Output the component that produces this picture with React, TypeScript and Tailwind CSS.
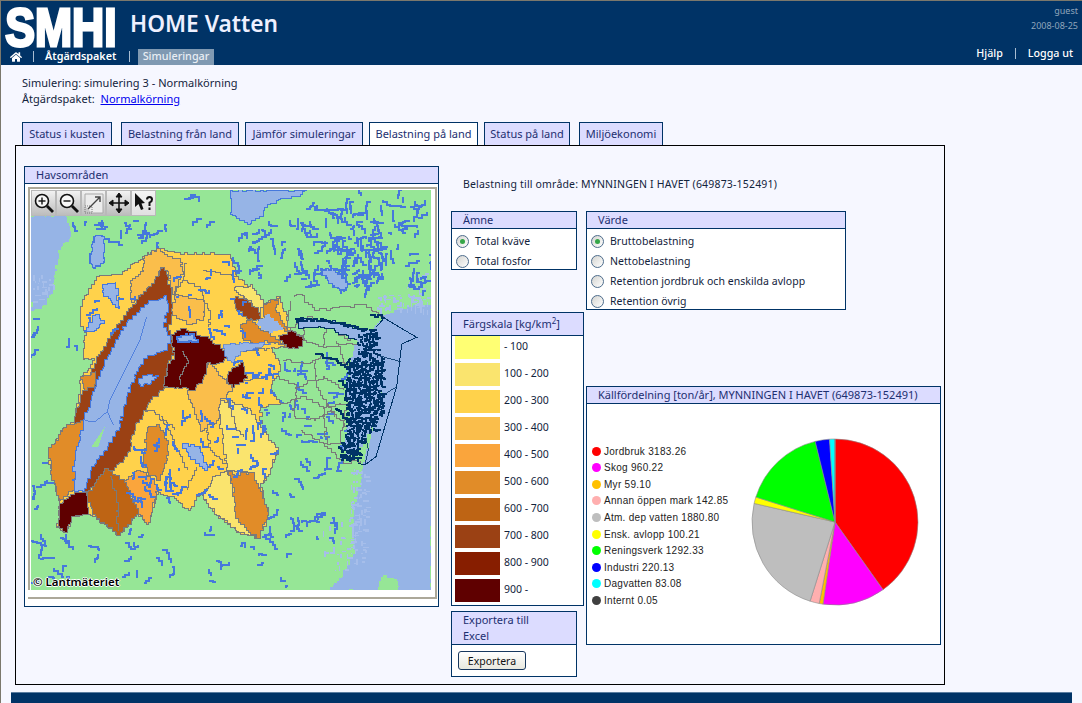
import { ReactNode } from "react";
import { FaHome } from "react-icons/fa";

const font = "font-['Noto_Sans','DejaVu_Sans',sans-serif]";

function Panel({ title, className, children }: { title: ReactNode; className: string; children: ReactNode }) {
  return (
    <section className={`border border-[#003366] bg-white ${className}`}>
      <h2 className="border-b border-[#003366] bg-[#DCDCFF] pl-[11px] text-[11px] font-normal leading-[16px] text-[#1c2f70]">{title}</h2>
      {children}
    </section>
  );
}

function Radio({ label, checked }: { label: string; checked?: boolean }) {
  return (
    <div className="flex h-[20px] items-center">
      <span className="mr-[6px] flex h-[13px] w-[13px] items-center justify-center rounded-full border border-[#4d6c8c] bg-gradient-to-br from-[#d4d4d0] to-white">
        {checked && <span className="h-[5px] w-[5px] rounded-full bg-[#35a648]" />}
      </span>
      <span className="mt-[2px] text-[10.5px] tracking-[0.05px] text-[#12233c]">{label}</span>
    </div>
  );
}

function Sep({ className }: { className: string }) {
  return <span className={`h-[11px] w-px bg-[#a9bdd2] ${className}`} />;
}

const tabs = [
  { label: "Status i kusten", width: "w-[90px]", gap: "ml-0" },
  { label: "Belastning från land", width: "w-[118px]", gap: "ml-[9px]" },
  { label: "Jämför simuleringar", width: "w-[118px]", gap: "ml-[6px]" },
  { label: "Belastning på land", width: "w-[109px]", gap: "ml-[6px]", active: true },
  { label: "Status på land", width: "w-[86px]", gap: "ml-[6px]" },
  { label: "Miljöekonomi", width: "w-[84px]", gap: "ml-[9px]" },
];

const scale = [
  { color: "bg-[#FFFF73]", label: "- 100" },
  { color: "bg-[#FAE46E]", label: "100 - 200" },
  { color: "bg-[#FFD24B]", label: "200 - 300" },
  { color: "bg-[#FABE4B]", label: "300 - 400" },
  { color: "bg-[#FAA53C]", label: "400 - 500" },
  { color: "bg-[#E18C28]", label: "500 - 600" },
  { color: "bg-[#BE6414]", label: "600 - 700" },
  { color: "bg-[#9B4114]", label: "700 - 800" },
  { color: "bg-[#871E00]", label: "800 - 900" },
  { color: "bg-[#5F0000]", label: "900 -" },
];

const sources = [
  { name: "Jordbruk", value: 3183.26, color: "#ff0000" },
  { name: "Skog", value: 960.22, color: "#ff00ff" },
  { name: "Myr", value: 59.1, color: "#ffc000" },
  { name: "Annan öppen mark", value: 142.85, color: "#ffafaf" },
  { name: "Atm. dep vatten", value: 1880.8, color: "#bebebe" },
  { name: "Ensk. avlopp", value: 100.21, color: "#ffff00" },
  { name: "Reningsverk", value: 1292.33, color: "#00ff00" },
  { name: "Industri", value: 220.13, color: "#0000ff" },
  { name: "Dagvatten", value: 83.08, color: "#00ffff" },
  { name: "Internt", value: 0.05, color: "#404040" },
];

function Pie() {
  const total = sources.reduce((s, x) => s + x.value, 0);
  let a = -Math.PI / 2;
  const r = 83;
  return (
    <svg width="170" height="170" viewBox="-85 -85 170 170" className="mt-[33px] shrink-0">
      {sources.map((s) => {
        const b = a + (s.value / total) * Math.PI * 2;
        const d = `M0 0L${r * Math.cos(a)} ${r * Math.sin(a)}A${r} ${r} 0 ${b - a > Math.PI ? 1 : 0} 1 ${r * Math.cos(b)} ${r * Math.sin(b)}Z`;
        a = b;
        return <path key={s.name} d={d} fill={s.color} stroke="#8c8c8c" strokeWidth="0.6" />;
      })}
    </svg>
  );
}

// seeded so the lakes land in the same place every run
let seed = 1234;
function rnd() {
  seed = (seed * 16807) % 2147483647;
  return seed / 2147483647;
}

const snap = (v: number) => Math.round(v / 4) * 4;

// turns a coarse M/L outline into a stepped edge like the map's raster
function stair(d: string) {
  let out = "";
  for (const sub of d.split("M").filter(Boolean)) {
    const nums = sub.match(/-?\d+(\.\d+)?/g)!.map(Number);
    const closed = sub.includes("Z");
    const pts: number[][] = [];
    for (let i = 0; i < nums.length; i += 2) pts.push([nums[i], nums[i + 1]]);
    if (closed) pts.push(pts[0]);
    out += `M${snap(pts[0][0])} ${snap(pts[0][1])}`;
    for (let i = 1; i < pts.length; i++) {
      const [x0, y0] = pts[i - 1];
      const [x1, y1] = pts[i];
      const n = Math.max(1, Math.ceil(Math.hypot(x1 - x0, y1 - y0) / 10));
      for (let k = 1; k <= n; k++) {
        const t = k / n;
        const j = k === n ? 0 : 7;
        const x = x0 + (x1 - x0) * t + (rnd() - 0.5) * j;
        const y = y0 + (y1 - y0) * t + (rnd() - 0.5) * j;
        out += `H${snap(x)}V${snap(y)}`;
      }
    }
    if (closed) out += "Z";
  }
  return out;
}

function scatter(zones: number[][], len: number) {
  let d = "";
  for (const [x, y, w, h, n] of zones) {
    for (let i = 0; i < n; i++) {
      let px = snap(x + rnd() * w);
      let py = snap(y + rnd() * h);
      let angle = rnd() * Math.PI * 2;
      const steps = 1 + Math.floor(rnd() * 4);
      d += `M${px} ${py}`;
      for (let s = 0; s < steps; s++) {
        const l = 5 + rnd() * len;
        angle += (rnd() - 0.5) * 1.6;
        px = snap(px + Math.cos(angle) * l);
        py = snap(py + Math.sin(angle) * l);
        d += `H${px}V${py}`;
      }
    }
  }
  return d;
}

function dots(zones: number[][], size: number) {
  let d = "";
  for (const [x, y, w, h, n] of zones) {
    for (let i = 0; i < n; i++) {
      const px = snap(x + rnd() * w);
      const py = snap(y + rnd() * h);
      d += rnd() > 0.5 ? `M${px} ${py}h${snap(4 + rnd() * size)}` : `M${px} ${py}v${snap(4 + rnd() * size)}`;
    }
  }
  return d;
}

const northLakes = scatter(
  [
    [850, -110, 340, 90, 30],
    [880, 20, 170, 150, 60],
    [640, -30, 560, 120, 60],
    [620, 90, 580, 90, 36],
    [110, -110, 480, 100, 14],
    [110, -20, 300, 70, 18],
    [1130, 130, 70, 70, 4],
  ],
  11,
);
const southLakes = scatter(
  [
    [5, 690, 50, 380, 10],
    [10, 900, 900, 170, 40],
    [740, 700, 200, 220, 18],
    [5, 240, 140, 130, 6],
  ],
  10,
);
const eastLakes = scatter([[730, 400, 220, 290, 36]], 10);
const catchLakes = scatter(
  [
    [430, 80, 220, 230, 20],
    [170, 150, 140, 210, 8],
    [590, 480, 150, 240, 24],
    [380, 560, 220, 260, 24],
    [270, 640, 110, 220, 14],
    [630, 370, 110, 140, 10],
  ],
  9,
);
const fringe = dots(
  [
    [960, 720, 50, 280, 90],
    [1040, 195, 160, 45, 60],
    [1130, 130, 70, 90, 24],
    [3, 130, 70, 90, 24],
    [880, 860, 90, 180, 30],
  ],
  14,
);
const archipelago = dots(
  [
    [985, 300, 55, 80, 110],
    [950, 385, 110, 85, 270],
    [945, 470, 115, 85, 290],
    [950, 555, 90, 50, 120],
    [940, 605, 65, 40, 60],
    [928, 640, 60, 50, 100],
  ],
  8,
);
const armPath = stair("M795 268L880 270L960 288L1010 300M855 372L920 392L960 425M915 535L960 580M925 450L960 480M1020 255L1062 264");

const silhouette =
  "M155 215L200 140L270 130L345 75L380 55L450 70L595 70L620 140L700 220L748 198L780 300L820 330L770 350L722 355L752 410L722 480L752 522L692 532L692 600L742 660L720 730L690 772L716 850L690 922L632 908L560 850L515 790L480 840L430 800L385 782L355 882L325 852L270 915L200 860L176 850L130 860L110 906L80 886L88 820L70 750L55 662L100 590L130 570L150 480L150 440L170 420L190 385L158 385L165 300L150 260Z";

const regions: { fill: string; d: string }[] = [
  { fill: "#FFD24B", d: silhouette },
  { fill: "#9B4114", d: "M400 105L425 190L430 250L415 300L435 370L410 410L410 470L350 530L315 600L290 680L235 740L170 785L130 730L130 570L150 500L200 380L260 285L300 230L350 170Z" },
  { fill: "#FABE4B", d: "M345 75L380 55L410 80L450 85L458 130L432 190L415 125L398 110L370 160L320 212L305 215L300 150L340 120Z" },
  { fill: "#FABE4B", d: "M435 190L470 200L525 215L520 270L480 285L425 250Z" },
  { fill: "#FAE46E", d: "M610 172L660 165L700 215L692 250L640 195Z" },
  { fill: "#9B4114", d: "M610 205L640 200L692 250L695 275L650 265L620 235Z" },
  { fill: "#E18C28", d: "M700 225L748 198L735 240L772 302L730 285L700 255Z" },
  { fill: "#E18C28", d: "M632 282L660 265L690 300L730 320L778 352L730 335L690 340L640 332Z" },
  { fill: "#FABE4B", d: "M470 480L535 395L608 482L572 515L565 572L515 602L500 550Z" },
  { fill: "#FAE46E", d: "M566 522L590 508L660 540L692 592L742 660L720 730L690 772L650 722L592 720L580 640Z" },
  { fill: "#FAE46E", d: "M515 790L555 735L592 722L610 770L620 860L682 922L632 908L590 872L560 850Z" },
  { fill: "#E18C28", d: "M592 718L610 735L670 730L716 850L690 922L670 912L615 860L610 770Z" },
  { fill: "#E18C28", d: "M340 685L350 592L385 582L415 642L410 692L392 752L350 722Z" },
  { fill: "#FAA53C", d: "M282 750L320 720L370 750L382 782L355 882L330 852Z" },
  { fill: "#BE6414", d: "M165 792L225 715L282 755L325 852L270 915L200 860Z" },
  { fill: "#E18C28", d: "M55 662L100 590L165 570L140 680L135 780L90 812L70 750Z" },
  { fill: "#E18C28", d: "M150 440L195 425L192 470L165 482Z" },
  { fill: "#5F0000", d: "M425 310L460 296L540 330L582 365L585 390L560 402L532 395L522 440L495 480L400 470L410 410L432 380Z" },
  { fill: "#5F0000", d: "M590 430L630 395L640 400L652 445L612 470L586 442Z" },
  { fill: "#5F0000", d: "M745 315L780 300L822 330L802 357L770 350Z" },
  { fill: "#5F0000", d: "M88 820L130 785L168 790L176 850L130 860L110 906L80 886Z" },
].map((r) => ({ fill: r.fill, d: stair(r.d) }));

const innerLines = stair(
  "M460 150L510 175L520 215M525 215L540 260L535 290M520 120L570 130L620 140M455 365L475 400L450 440L450 465M345 545L370 540L420 610L470 720M530 590L540 660L590 710M590 510L620 600L640 620M500 710L470 780M390 560L430 600M240 740L260 800L262 905M640 365L720 355M640 450L700 440M470 100L460 150L435 190",
);

const eastLines = stair(
  "M790 200L810 190L850 240L900 235L1000 225L1060 262M770 300L830 260L900 290L950 330L1000 310M820 330L880 350L960 340L1020 370M760 390L830 400L870 380L950 400L985 440M740 440L800 470L880 440L940 480M752 520L810 500L880 530L950 520M790 560L850 570L900 540L960 600M810 600L880 640L930 640M880 640L940 700L990 690M850 390L860 470L910 560M920 330L940 400M830 260L820 330M780 210L770 300M890 290L880 350M800 470L790 560M880 530L890 640M950 520L930 640",
);

function MapView() {
  return (
    <svg width="400" height="400" viewBox="3 -120 1200 1200" shapeRendering="crispEdges" className="block">
      <rect x="3" y="-120" width="1200" height="1200" fill="#96E696" />
      <path d={stair("M3 -42L108 -42L125 20L90 60L70 180L50 225L3 250Z")} fill="#96B4E6" />
      <path d={stair("M600 -120L830 -120L810 -102L750 -92L700 -57L700 -42L660 -17L620 -42L600 -52Z")} fill="#96B4E6" stroke="#4678DC" strokeWidth="3" />
      <path d={stair("M1203 222L1160 225L1110 240L1060 262L1030 300L1060 470L1040 570L1000 705L990 760L970 860L975 970L940 1040L900 1080L1040 1080L1060 1035L1100 1050L1105 1080L1203 1080Z")} fill="#96B4E6" />
      <path d={fringe} fill="none" stroke="#A6BEEA" strokeWidth="5" />
      <path d={northLakes + southLakes + eastLakes} fill="none" stroke="#4678DC" strokeWidth="6.500" strokeLinecap="square" />
      <path d={stair("M870 115L910 120L960 165L945 185L900 160Z")} fill="#96B4E6" stroke="#4678DC" strokeWidth="4" />
      <path d={stair("M190 20L222 20L225 95L195 115L178 90Z")} fill="#96B4E6" stroke="#4678DC" strokeWidth="4" />
      {regions.map((r) => (
        <path key={r.d} d={r.d} fill={r.fill} stroke="#7a7a7a" strokeWidth="3" />
      ))}
      <path d={innerLines} fill="none" stroke="#7a7a7a" strokeWidth="3" />
      <path d={catchLakes} fill="none" stroke="#4678DC" strokeWidth="6.500" strokeLinecap="square" />
      <path d={stair("M405 195L415 240L400 290L420 330L410 360L370 375L345 385L320 430L300 470L280 540L270 590L230 660L185 720L165 782L135 782L130 700L150 620L170 540L205 440L235 370L290 270L350 220Z")} fill="#96B4E6" stroke="#4678DC" strokeWidth="3" />
      <path d="M350 260L330 330L240 510L232 545L250 585M232 545L195 575L165 572" fill="none" stroke="#4678DC" strokeWidth="2.500" />
      <path d="M185 650L225 590L205 650Z" fill="#96E696" />
      <path d={stair("M325 445L350 430L385 440L360 462L330 465Z")} fill="#96B4E6" stroke="#4678DC" strokeWidth="3" />
      <path d={stair("M440 320L480 310L505 335L450 335Z")} fill="#96B4E6" stroke="#4678DC" strokeWidth="5" />
      <path d={stair("M580 345L640 335L720 342L640 365L610 395L582 372Z")} fill="#96B4E6" stroke="#4678DC" strokeWidth="2" />
      <path d={stair("M680 280L712 250L760 300L720 312Z")} fill="#96B4E6" />
      <path d={stair("M215 165L255 155L268 235L240 205L220 200Z")} fill="#96B4E6" stroke="#4678DC" strokeWidth="3" />
      <path d={stair("M165 300L195 250L222 280L190 305Z")} fill="#96B4E6" stroke="#4678DC" strokeWidth="3" />
      <path d={stair("M455 640L510 650L530 720L480 680Z")} fill="#96B4E6" stroke="#4678DC" strokeWidth="3" />
      <path d={eastLines} fill="none" stroke="#7a7a7a" strokeWidth="3" />
      <path d="M1040 290L1062 264L1160 322L1115 342L1100 470L1038 680L1005 705L985 700" fill="none" stroke="#003366" strokeWidth="3" />
      <path d="M1040 375L1112 395M1060 495L1100 470M1045 575L1005 610L1015 660L1005 705" fill="none" stroke="#003366" strokeWidth="2.500" />
      <path d={stair("M800 265L880 268L950 290L1010 300L1020 340L880 290L810 295Z")} fill="#96B4E6" stroke="#003366" strokeWidth="3" />
      <path d={stair("M990 300L1040 300L1060 480L1040 570L1000 650L960 680L940 650L960 560L950 470L960 400Z")} fill="#96B4E6" />
      <path d={archipelago} fill="none" stroke="#003366" strokeWidth="5.500" />
      <path d={armPath} fill="none" stroke="#003366" strokeWidth="6" />
    </svg>
  );
}

function ToolButton({ active, children }: { active?: boolean; children: ReactNode }) {
  return (
    <div className={`flex h-[26px] w-[25px] items-center justify-center border border-[#b9b9b9] ${active ? "bg-gradient-to-b from-[#f4f4f4] to-[#e0e0e0]" : "bg-gradient-to-b from-[#f2f2f2] to-[#bdbdbd]"}`}>
      {children}
    </div>
  );
}

function Lens({ plus }: { plus?: boolean }) {
  return (
    <svg width="22" height="22" viewBox="0 0 22 22" fill="none" stroke="#111">
      <circle cx="9" cy="9" r="6.500" fill="#f7f7f7" strokeWidth="1.600" />
      <path d="M14 14L20 20" strokeWidth="2.800" />
      <path d="M5.500 9H12.500" strokeWidth="1.400" />
      {plus && <path d="M9 5.500V12.500" strokeWidth="1.400" />}
    </svg>
  );
}

function Toolbar() {
  return (
    <div className="absolute left-0 top-0 flex">
      <ToolButton><Lens plus /></ToolButton>
      <ToolButton><Lens /></ToolButton>
      <ToolButton>
        <svg width="22" height="22" viewBox="0 0 22 22" fill="none">
          <path d="M2 14V2H20V21H9" stroke="#aaa" fill="#ececec" />
          <path d="M2 14H9V21H2Z" stroke="#777" strokeDasharray="1 1" />
          <path d="M5 17L17 5M12 5H17V10" stroke="#444" strokeWidth="1.400" />
        </svg>
      </ToolButton>
      <ToolButton>
        <svg width="22" height="22" viewBox="0 0 22 22" fill="#111" stroke="#111">
          <path d="M3 11H19M11 3V19" strokeWidth="1.600" />
          <path d="M11 1L8 5H14ZM11 21L8 17H14ZM1 11L5 8V14ZM21 11L17 8V14Z" />
        </svg>
      </ToolButton>
      <ToolButton active>
        <svg width="22" height="22" viewBox="0 0 22 22" fill="#111">
          <path d="M2 1L2 15L5.500 12L8 18L10.500 17L8.500 11.500L12 11Z" />
          <path d="M13 7.500Q13 4 16.500 4Q20 4 20 7.500Q20 10 17.500 11V14H15.500V10Q18 9 18 7.500Q18 6 16.500 6Q15 6 15 7.500ZM15.500 15.500H17.500V18H15.500Z" />
        </svg>
      </ToolButton>
    </div>
  );
}

export default function App() {
  return (
    <div className={`${font} h-[703px] w-[1082px] overflow-hidden border-l border-t border-[#7b786c] bg-[#F6F7FF] text-[11px] text-[#12233c]`}>
      <header className="flex h-[64px] justify-between bg-[#003366] text-white">
        <div>
          <div className="flex h-[47px] items-start">
            <svg width="118" height="43" viewBox="0 0 118 43" className="ml-[3px] mt-[4px]">
              <g transform="scale(0.84 1)">
                <text x="1.500" y="41" fill="#fff" stroke="#fff" strokeWidth="3" fontFamily="'Liberation Sans',sans-serif" fontWeight="700" fontSize="53">SMHI</text>
              </g>
            </svg>
            <h1 className="ml-[8px] mt-[6px] text-[22.700px] font-semibold leading-[34px] text-[#eef0ff]">HOME Vatten</h1>
          </div>
          <nav className="flex h-[17px] items-center text-[10.800px] font-semibold">
            <FaHome className="ml-[9px] w-[12px] text-[12px] text-white" />
            <Sep className="ml-[11px]" />
            <span className="ml-[11px] w-[72px] whitespace-nowrap">Åtgärdspaket</span>
            <Sep className="ml-[12px]" />
            <span className="ml-[8px] flex h-[16px] w-[76px] items-center justify-center bg-[#7f99b2] font-medium text-[#e9eef4]">Simuleringar</span>
          </nav>
        </div>
        <div className="flex flex-col items-end">
          <div className="mr-[4px] mt-[2px] text-[9px] leading-[15px] text-[#8fa5bb]">
            <p className="text-right">guest</p>
            <p>2008-08-25</p>
          </div>
          <div className="mr-[9px] mt-[12px] flex items-center text-[10.700px] font-medium leading-[16px]">
            <span>Hjälp</span>
            <Sep className="mx-[12px]" />
            <span>Logga ut</span>
          </div>
        </div>
      </header>

      <div className="pl-[21px] pt-[10px] leading-[16px] tracking-[0.03px]">
        <p>Simulering: simulering 3 - Normalkörning</p>
        <p>Åtgärdspaket: <a className="ml-[3px] text-[#0000ee] underline" href="#normal">Normalkörning</a></p>
      </div>

      <div className="ml-[21px] mt-[15px] flex h-[23px]">
        {tabs.map((t) => (
          <div key={t.label} className={`flex items-center justify-center border border-b-0 border-[#003366] text-[11px] ${t.width} ${t.gap} ${t.active ? "bg-white text-[#1c2f70]" : "bg-[#DCDCFF] text-[#1c2f70]"}`}>
            {t.label}
          </div>
        ))}
      </div>

      <main className="ml-[14px] flex h-[540px] w-[930px] border border-black pl-[8px] pt-[20px]">
        <Panel title="Havsområden" className="h-[441px] w-[415px]">
          <div className="ml-[3px] mt-[3px] h-[412px] w-[409px] border-b-[2px] border-r-[2px] border-[#aca899] bg-white">
            <div className="border-l-[2px] border-t-[2px] border-[#aca899] pl-px pt-px">
              <div className="relative h-[400px] w-[400px]">
                <MapView />
                <Toolbar />
                <span className="absolute bottom-[1px] left-[2px] text-[11.500px] font-semibold leading-[14px] text-black [text-shadow:1px_0_0_#fff,-1px_0_0_#fff,0_1px_0_#fff,0_-1px_0_#fff]">© Lantmäteriet</span>
              </div>
            </div>
          </div>
        </Panel>

        <div className="ml-[12px]">
          <p className="ml-[12px] mt-[8px] h-[37px] text-[10.500px] leading-[20px] tracking-[0.18px]">Belastning till område: MYNNINGEN I HAVET (649873-152491)</p>
          <div className="flex">
            <div className="w-[135px]">
              <Panel title="Ämne" className="h-[59px] w-[126px]">
                <div className="pl-[4px] pt-[2px]">
                  <Radio label="Total kväve" checked />
                  <Radio label="Total fosfor" />
                </div>
              </Panel>
              <Panel title={<span className="leading-[22px]">Färgskala [kg/km<sup className="text-[8px]">2</sup>]</span>} className="mt-[42px] h-[294px] w-[133px]">
                <div className="flex flex-col gap-[4px] pl-[3px]">
                  {scale.map((s) => (
                    <div key={s.label} className="flex h-[23px] items-center">
                      <span className={`h-[23px] w-[45px] ${s.color}`} />
                      <span className="mb-[2px] ml-[4px] text-[10.500px]">{s.label}</span>
                    </div>
                  ))}
                </div>
              </Panel>
              <Panel title={<>Exportera till<br />Excel</>} className="mt-[5px] h-[66px] w-[126px]">
                <button className="ml-[6px] mt-[6px] block h-[19px] w-[68px] rounded-[3px] border border-[#17375e] bg-gradient-to-b from-white to-[#e8e8de] text-[10.500px] leading-[16px] text-[#111]">Exportera</button>
              </Panel>
            </div>
            <div>
              <Panel title="Värde" className="h-[99px] w-[260px]">
                <div className="pl-[4px] pt-[2px]">
                  <Radio label="Bruttobelastning" checked />
                  <Radio label="Nettobelastning" />
                  <Radio label="Retention jordbruk och enskilda avlopp" />
                  <Radio label="Retention övrig" />
                </div>
              </Panel>
              <Panel title="Källfördelning [ton/år], MYNNINGEN I HAVET (649873-152491)" className="mt-[76px] h-[259px] w-[355px]">
                <div className="flex">
                  <ul className="w-[163px] shrink-0 pl-[5px] pt-[39px] font-['Liberation_Sans',sans-serif] text-[10px] tracking-[0.28px] text-[#222]">
                    {sources.map((s) => (
                      <li key={s.name} className="flex h-[16.550px] items-center">
                        <span className="mr-[3px] h-[9px] w-[9px] rounded-full" style={{ backgroundColor: s.color }} />
                        {s.name} {s.value.toFixed(2)}
                      </li>
                    ))}
                  </ul>
                  <Pie />
                </div>
              </Panel>
            </div>
          </div>
        </div>
      </main>

      <div className="ml-[10px] mt-[7px] h-[11px] w-[1061px] border-t border-[#5b7da0] bg-[#003366]" />
    </div>
  );
}
